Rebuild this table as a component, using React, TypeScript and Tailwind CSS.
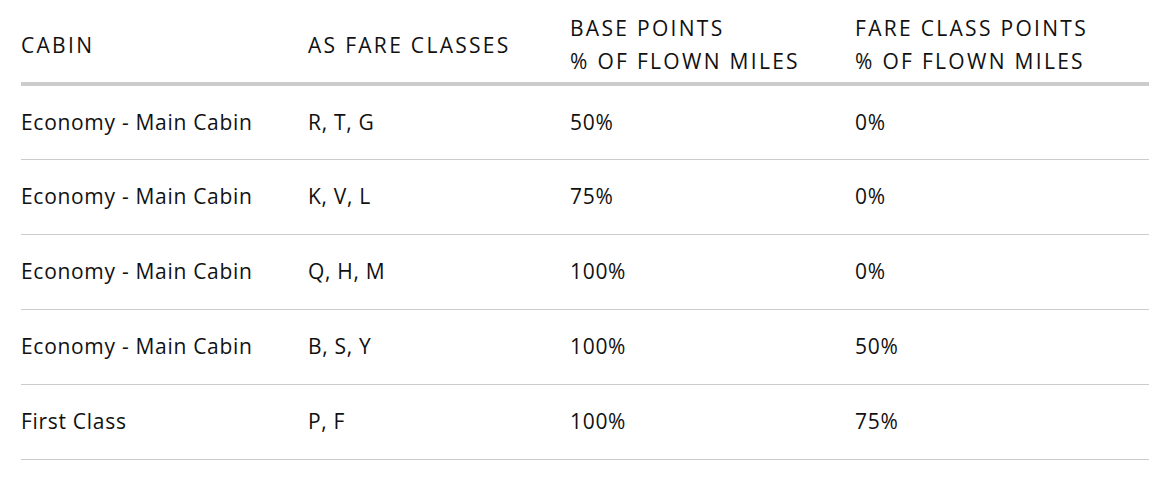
const rows = [
  { cabin: "Economy - Main Cabin", classes: "R, T, G", base: "50%", fare: "0%" },
  { cabin: "Economy - Main Cabin", classes: "K, V, L", base: "75%", fare: "0%" },
  { cabin: "Economy - Main Cabin", classes: "Q, H, M", base: "100%", fare: "0%" },
  { cabin: "Economy - Main Cabin", classes: "B, S, Y", base: "100%", fare: "50%" },
  { cabin: "First Class", classes: "P, F", base: "100%", fare: "75%" },
];

export default function App() {
  return (
    <div className="w-[1173px] h-[478px] bg-white pl-[21px] pt-[12px] font-['Open_Sans',sans-serif] text-[21px] text-[#111] tracking-[0.7px]">
      <table className="w-[1128px] table-fixed border-collapse">
        <colgroup>
          <col className="w-[287px]" />
          <col className="w-[262px]" />
          <col className="w-[285px]" />
          <col className="w-[294px]" />
        </colgroup>
        <thead>
          <tr className="border-b-4 border-[#cccccc] leading-[33px] align-middle tracking-[2.3px]">
            <th className="text-left font-normal pb-1">CABIN</th>
            <th className="text-left font-normal pb-1">AS FARE CLASSES</th>
            <th className="text-left font-normal pb-1">
              BASE POINTS
              <br />% OF FLOWN MILES
            </th>
            <th className="text-left font-normal pb-1">
              FARE CLASS POINTS
              <br />% OF FLOWN MILES
            </th>
          </tr>
        </thead>
        <tbody>
          {rows.map((r, i) => (
            <tr key={i} className="border-b border-[#cccccc] h-[75px] align-middle">
              <td>{r.cabin}</td>
              <td>{r.classes}</td>
              <td>{r.base}</td>
              <td>{r.fare}</td>
            </tr>
          ))}
        </tbody>
      </table>
    </div>
  );
}
